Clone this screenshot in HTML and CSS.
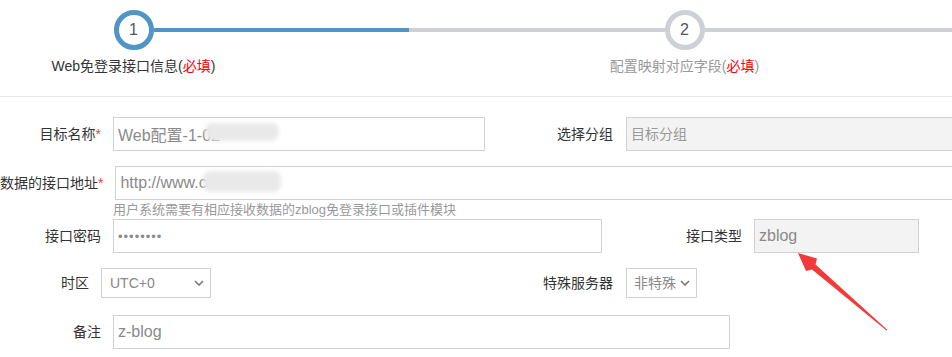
FILE: index.html
```html
<!DOCTYPE html>
<html lang="zh-CN">
<head>
    <meta charset="UTF-8">
    <meta name="viewport" content="width=device-width, initial-scale=1.0">
    <title>Web免登录接口配置</title>
    <link rel="stylesheet" href="styles.css">
</head>
<body>
    <!-- Steps -->
    <div class="steps-wrap">
        <div class="steps">
            <div class="step active">
                <div class="step-head">
                    <span class="bar bar-none"></span>
                    <span class="circle">1</span>
                    <span class="bar bar-done"></span>
                </div>
                <div class="step-title">Web免登录接口信息(<span class="must">必填</span>)</div>
            </div>
            <div class="step">
                <div class="step-head">
                    <span class="bar"></span>
                    <span class="circle">2</span>
                    <span class="bar"></span>
                </div>
                <div class="step-title">配置映射对应字段(<span class="must">必填</span>)</div>
            </div>
        </div>
    </div>

    <!-- Form -->
    <div class="form">
        <div class="row">
            <label class="label">目标名称<span class="star">*</span></label>
            <div class="field">
                <input class="input input-md" type="text" value="Web配置-1-02">
                <span class="smudge smudge-name"></span>
            </div>
            <label class="label side-a">选择分组</label>
            <input class="input input-wide readonly small" type="text" placeholder="目标分组" readonly>
        </div>

        <div class="row">
            <label class="label">数据的接口地址<span class="star">*</span></label>
            <div class="field">
                <input class="input input-wide" type="text" value="http://www.cc">
                <span class="smudge smudge-url"></span>
            </div>
        </div>
        <div class="help">用户系统需要有相应接收数据的zblog免登录接口或插件模块</div>

        <div class="row">
            <label class="label">接口密码</label>
            <input class="input input-lg" type="password" value="12345678">
            <label class="label side-b">接口类型</label>
            <input class="input input-sm readonly" type="text" value="zblog" readonly>
        </div>

        <div class="row row-select">
            <label class="label label-narrow">时区</label>
            <div class="select-wrap">
                <select class="select select-tz">
                    <option>UTC+0</option>
                    <option>UTC+8</option>
                </select>
                <svg class="chevron" width="10" height="6" viewBox="0 0 10 6"><path d="M1 1l4 4 4-4" fill="none" stroke="#777" stroke-width="1.6"/></svg>
            </div>
            <label class="label side-c">特殊服务器</label>
            <div class="select-wrap">
                <select class="select select-srv">
                    <option>非特殊</option>
                    <option>特殊</option>
                </select>
                <svg class="chevron" width="10" height="6" viewBox="0 0 10 6"><path d="M1 1l4 4 4-4" fill="none" stroke="#777" stroke-width="1.6"/></svg>
            </div>
        </div>

        <div class="row">
            <label class="label">备注</label>
            <input class="input input-xl" type="text" value="z-blog">
        </div>
    </div>

    <!-- annotation arrow -->
    <svg class="arrow" width="952" height="357" viewBox="0 0 952 357">
        <polygon points="798,253 817,258.5 815.5,264.5 887.5,330 886.5,330.5 812,269.5 806,271" fill="#f23a3a"/>
    </svg>
</body>
</html>
```

FILE: styles.css
```css
body {
    margin: 0;
    width: 952px;
    height: 357px;
    overflow: hidden;
    position: relative;
    background: #fff;
    color: #333;
    font-family: "Liberation Sans", "Noto Sans CJK SC", sans-serif;
}

/* steps */
.steps-wrap {
    height: 96px;
    border-bottom: 1px solid #e8e8e8;
}
.steps {
    display: flex;
    margin-left: -142px;
    padding-top: 10px;
}
.step {
    flex: 0 0 551px;
    text-align: center;
}
.step-head {
    display: flex;
    align-items: center;
    height: 40px;
}
.bar {
    flex: 1;
    height: 4px;
    background: #cdd0d5;
}
.bar-none {
    background: transparent;
}
.bar-done {
    background: #5194c6;
}
.circle {
    box-sizing: border-box;
    width: 40px;
    height: 40px;
    border: 5px solid #cdd0d5;
    border-radius: 50%;
    font-size: 16px;
    line-height: 30px;
    color: #555;
}
.step.active .circle {
    border-color: #5194c6;
}
.step-title {
    margin-top: 6px;
    font-size: 14px;
    line-height: 20px;
    color: #999;
}
.step.active .step-title {
    color: #333;
}
.must {
    color: #f00;
}

/* form */
.form {
    padding-top: 20px;
}
.row {
    display: flex;
    align-items: center;
    height: 34px;
    margin-bottom: 15px;
}
.row-select {
    height: 30px;
    margin-bottom: 17px;
}
.label {
    flex: 0 0 101px;
    display: flex;
    justify-content: flex-end;
    white-space: nowrap;
    font-size: 14px;
    line-height: 20px;
    color: #333;
    margin-right: 12px;
}
.label-narrow {
    flex-basis: 89px;
}
.side-a {
    flex-basis: 128px;
    margin-right: 13px;
}
.side-b {
    flex-basis: 140px;
}
.side-c {
    flex-basis: 402px;
    margin-right: 13px;
}
.star {
    color: #f33;
}
.field {
    position: relative;
}
.input {
    box-sizing: border-box;
    height: 34px;
    padding: 0 4px;
    border: 1px solid #d2d2d2;
    background: #fff;
    color: #8a8a8a;
    font-family: inherit;
    font-size: 16px;
    outline: none;
    flex: none;
}
.input.small {
    font-size: 14px;
}
.input::placeholder {
    color: #999;
}
.input[type="password"] {
    font-size: 13px;
    letter-spacing: 1px;
}
.readonly {
    background: #f3f3f3;
}
.input-sm { width: 165px; }
.input-md { width: 372px; }
.input-lg { width: 489px; }
.input-xl { width: 617px; }
.input-wide { width: 900px; }

/* the blurred parts of the screenshot */
.smudge {
    position: absolute;
    background: #e9e9e9;
    border-radius: 8px;
    filter: blur(2px);
}
.smudge-name {
    left: 92px;
    top: 6px;
    width: 74px;
    height: 18px;
}
.smudge-url {
    left: 88px;
    top: 5px;
    width: 78px;
    height: 21px;
}

.help {
    padding-left: 113px;
    height: 19px;
    margin-top: -15px;
    font-size: 13px;
    line-height: 19px;
    color: #999;
    white-space: nowrap;
}

/* selects */
.select-wrap {
    position: relative;
}
.select {
    box-sizing: border-box;
    height: 30px;
    padding: 0 20px 0 8px;
    border: 1px solid #d2d2d2;
    border-radius: 0;
    background: #fff;
    color: #888;
    font-family: inherit;
    font-size: 14px;
    appearance: none;
    -webkit-appearance: none;
    outline: none;
}
.select-tz { width: 110px; }
.select-srv { width: 71px; padding-left: 7px; }
.chevron {
    position: absolute;
    right: 7px;
    top: 12px;
    pointer-events: none;
}

.arrow {
    position: absolute;
    left: 0;
    top: 0;
    pointer-events: none;
}
```
